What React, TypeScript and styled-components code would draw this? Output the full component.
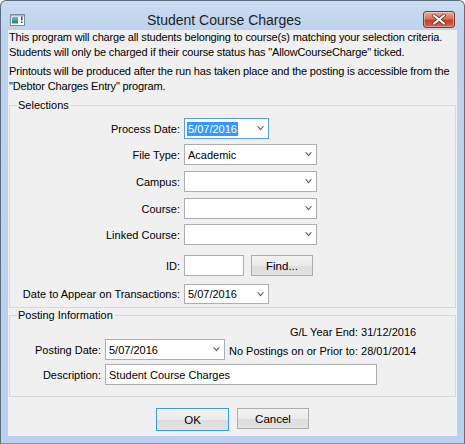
import styled, { createGlobalStyle } from "styled-components";

const GlobalStyle = createGlobalStyle`
  html, body {
    margin: 0;
    padding: 0;
    background: #ffffff;
  }
  body {
    font-family: "Liberation Sans", Arial, sans-serif;
    font-size: 11px;
    color: #000000;
  }
  * {
    box-sizing: border-box;
  }
`;

const Window = styled.div`
  width: 465px;
  height: 444px;
  display: flex;
  flex-direction: column;
  background: linear-gradient(#cadcf0, #bdd3ed 30px, #b9d1ee);
  border: 1px solid #5d6d80;
  border-bottom-color: #21c0d6;
  border-radius: 6px 6px 0 0;
`;

const TitleBar = styled.div`
  height: 29px;
  flex-shrink: 0;
  display: flex;
  align-items: center;
  padding: 8px 9px 0 9px;
`;

const Title = styled.div`
  flex: 1;
  text-align: center;
  font-family: "Liberation Sans", Arial, sans-serif;
  font-size: 14px;
  color: #1e1e1e;
  padding-top: 1px;
`;

const CloseButton = styled.div`
  width: 32px;
  height: 17px;
  border: 1px solid #86352a;
  border-radius: 3px;
  background: linear-gradient(#e9a898, #d9735c 45%, #c2412b 55%, #d2674e);
  display: flex;
  align-items: center;
  justify-content: center;
  box-shadow: inset 0 0 0 1px rgba(255, 255, 255, 0.35);
`;

const Client = styled.div`
  flex: 1;
  margin: 0 7px 7px 7px;
  background: #f0f0f0;
  display: flex;
  flex-direction: column;
  padding: 0 1px;
`;

const Intro = styled.p<{ $mt?: number }>`
  margin: ${(p) => p.$mt ?? 0}px 0 0 0;
  line-height: 15px;
  letter-spacing: -0.16px;
  white-space: nowrap;
`;

const Group = styled.fieldset<{ $mt?: number; $pb: number }>`
  margin: ${(p) => p.$mt ?? 0}px 0 0 0;
  padding: 0 0 ${(p) => p.$pb}px 0;
  border: 1px solid #d9d9d9;
  min-width: 0;
`;

const Legend = styled.legend`
  margin-left: 7px;
  padding: 0 2px 0 1px;
  line-height: 13px;
`;

const Row = styled.div<{ $mt?: number; $label: number }>`
  display: flex;
  align-items: center;
  gap: 4px;
  margin-top: ${(p) => p.$mt ?? 0}px;
  & > label {
    width: ${(p) => p.$label}px;
    flex-shrink: 0;
    text-align: right;
  }
`;

const Label = styled.label``;

const Combo = styled.div<{ $w: number; $h?: number; $focus?: boolean }>`
  width: ${(p) => p.$w}px;
  height: ${(p) => p.$h ?? 21}px;
  background: #ffffff;
  border: 1px solid ${(p) => (p.$focus ? "#569de5" : "#abadb3")};
  display: flex;
  align-items: center;
  padding: 0 4px 0 2px;
`;

const ComboText = styled.span<{ $selected?: boolean }>`
  flex: 1;
  white-space: nowrap;
  & > span {
    padding: 1px 1px;
    background: ${(p) => (p.$selected ? "#3399ff" : "transparent")};
    color: ${(p) => (p.$selected ? "#ffffff" : "#000000")};
  }
`;

const TextBox = styled.div<{ $w: number }>`
  width: ${(p) => p.$w}px;
  height: 21px;
  background: #ffffff;
  border: 1px solid #abadb3;
  display: flex;
  align-items: center;
  padding: 0 3px;
`;

const Button = styled.div<{ $w: number; $default?: boolean }>`
  width: ${(p) => p.$w}px;
  height: ${(p) => (p.$default ? 23 : 21)}px;
  border: 1px solid ${(p) => (p.$default ? "#3c9ae4" : "#adadad")};
  background: linear-gradient(#f2f2f2, #ebebeb 50%, #dddddd 51%, #e3e3e3);
  display: flex;
  align-items: center;
  justify-content: center;
  font-size: 11.5px;
`;

const FindButton = styled(Button)`
  margin-left: 3px;
`;

const PostGrid = styled.div`
  display: grid;
  grid-template-columns: 91px 120px auto;
  column-gap: 4px;
  justify-content: start;
  align-items: center;
  padding-top: 4px;
  & > label {
    text-align: right;
  }
`;

const DescLabel = styled.label`
  margin-top: 4px;
`;

const YearEnd = styled.div`
  grid-column: 2 / 4;
  justify-self: end;
  line-height: 13px;
`;

const NoPostings = styled.div`
  padding-top: 3px;
  white-space: nowrap;
`;

const DescRow = styled.div`
  grid-column: 2 / 4;
  margin-top: 4px;
`;

const Buttons = styled.div`
  display: flex;
  justify-content: center;
  gap: 8px;
  margin-top: 11px;
`;

const Arrow = () => (
  <svg width="7" height="5" viewBox="0 0 7 5">
    <path d="M0 0.3 L3.5 4.6 L7 0.3 L5.6 0.3 L3.5 2.8 L1.4 0.3 Z" fill="#5b5b5b" />
  </svg>
);

const AppIcon = () => (
  <svg width="15" height="12" viewBox="0 0 15 12">
    <rect x="0.5" y="0.5" width="14" height="11" fill="#ffffff" stroke="#7a8a99" />
    <rect x="1" y="1" width="13" height="1.5" fill="#9fb8d4" />
    <rect x="2" y="3.5" width="6" height="6" fill="#2f8f7f" />
    <rect x="2" y="3.5" width="6" height="3" fill="#4aa8c8" />
    <rect x="11" y="2.5" width="1.5" height="4" fill="#1a4f8a" />
    <rect x="11" y="7.5" width="1.5" height="1.5" fill="#1a4f8a" />
  </svg>
);

const CloseX = () => (
  <svg width="14" height="11" viewBox="0 0 14 11">
    <path d="M2 1.5 L12 9.5 M12 1.5 L2 9.5" stroke="#7a2c20" strokeWidth="3.6" strokeLinecap="round" />
    <path d="M2 1.5 L12 9.5 M12 1.5 L2 9.5" stroke="#ffffff" strokeWidth="2.2" strokeLinecap="round" />
  </svg>
);

type ComboProps = {
  width: number;
  value?: string;
  selected?: boolean;
  height?: number;
};

const ComboBox = ({ width, value, selected, height }: ComboProps) => (
  <Combo $w={width} $h={height} $focus={selected}>
    <ComboText $selected={selected}>
      <span>{value}</span>
    </ComboText>
    <Arrow />
  </Combo>
);

export default function App() {
  return (
    <>
      <GlobalStyle />
      <Window>
        <TitleBar>
          <AppIcon />
          <Title>Student Course Charges</Title>
          <CloseButton>
            <CloseX />
          </CloseButton>
        </TitleBar>
        <Client>
          <Intro>
            This program will charge all students belonging to course(s) matching your selection criteria.
            <br />
            Students will only be charged if their course status has "AllowCourseCharge" ticked.
          </Intro>
          <Intro $mt={4}>
            Printouts will be produced after the run has taken place and the posting is accessible from the
            <br />
            "Debtor Charges Entry" program.
          </Intro>

          <Group $mt={5} $pb={3}>
            <Legend>Selections</Legend>
            <Row $label={170} $mt={6}>
              <Label>Process Date:</Label>
              <ComboBox width={85} value="5/07/2016" selected height={21} />
            </Row>
            <Row $label={170} $mt={5}>
              <Label>File Type:</Label>
              <ComboBox width={133} value="Academic" />
            </Row>
            <Row $label={170} $mt={6}>
              <Label>Campus:</Label>
              <ComboBox width={133} />
            </Row>
            <Row $label={170} $mt={6}>
              <Label>Course:</Label>
              <ComboBox width={133} />
            </Row>
            <Row $label={170} $mt={5}>
              <Label>Linked Course:</Label>
              <ComboBox width={133} />
            </Row>
            <Row $label={170} $mt={10}>
              <Label>ID:</Label>
              <TextBox $w={60} />
              <FindButton $w={62}>Find...</FindButton>
            </Row>
            <Row $label={170} $mt={8}>
              <Label>Date to Appear on Transactions:</Label>
              <ComboBox width={85} value="5/07/2016" height={20} />
            </Row>
          </Group>

          <Group $mt={1} $pb={11}>
            <Legend>Posting Information</Legend>
            <PostGrid>
              <YearEnd>G/L Year End: 31/12/2016</YearEnd>
              <Label>Posting Date:</Label>
              <ComboBox width={120} value="5/07/2016" />
              <NoPostings>No Postings on or Prior to: 28/01/2014</NoPostings>
              <DescLabel>Description:</DescLabel>
              <DescRow>
                <TextBox $w={272}>Student Course Charges</TextBox>
              </DescRow>
            </PostGrid>
          </Group>

          <Buttons>
            <Button $w={73} $default>
              OK
            </Button>
            <Button $w={72}>Cancel</Button>
          </Buttons>
        </Client>
      </Window>
    </>
  );
}
